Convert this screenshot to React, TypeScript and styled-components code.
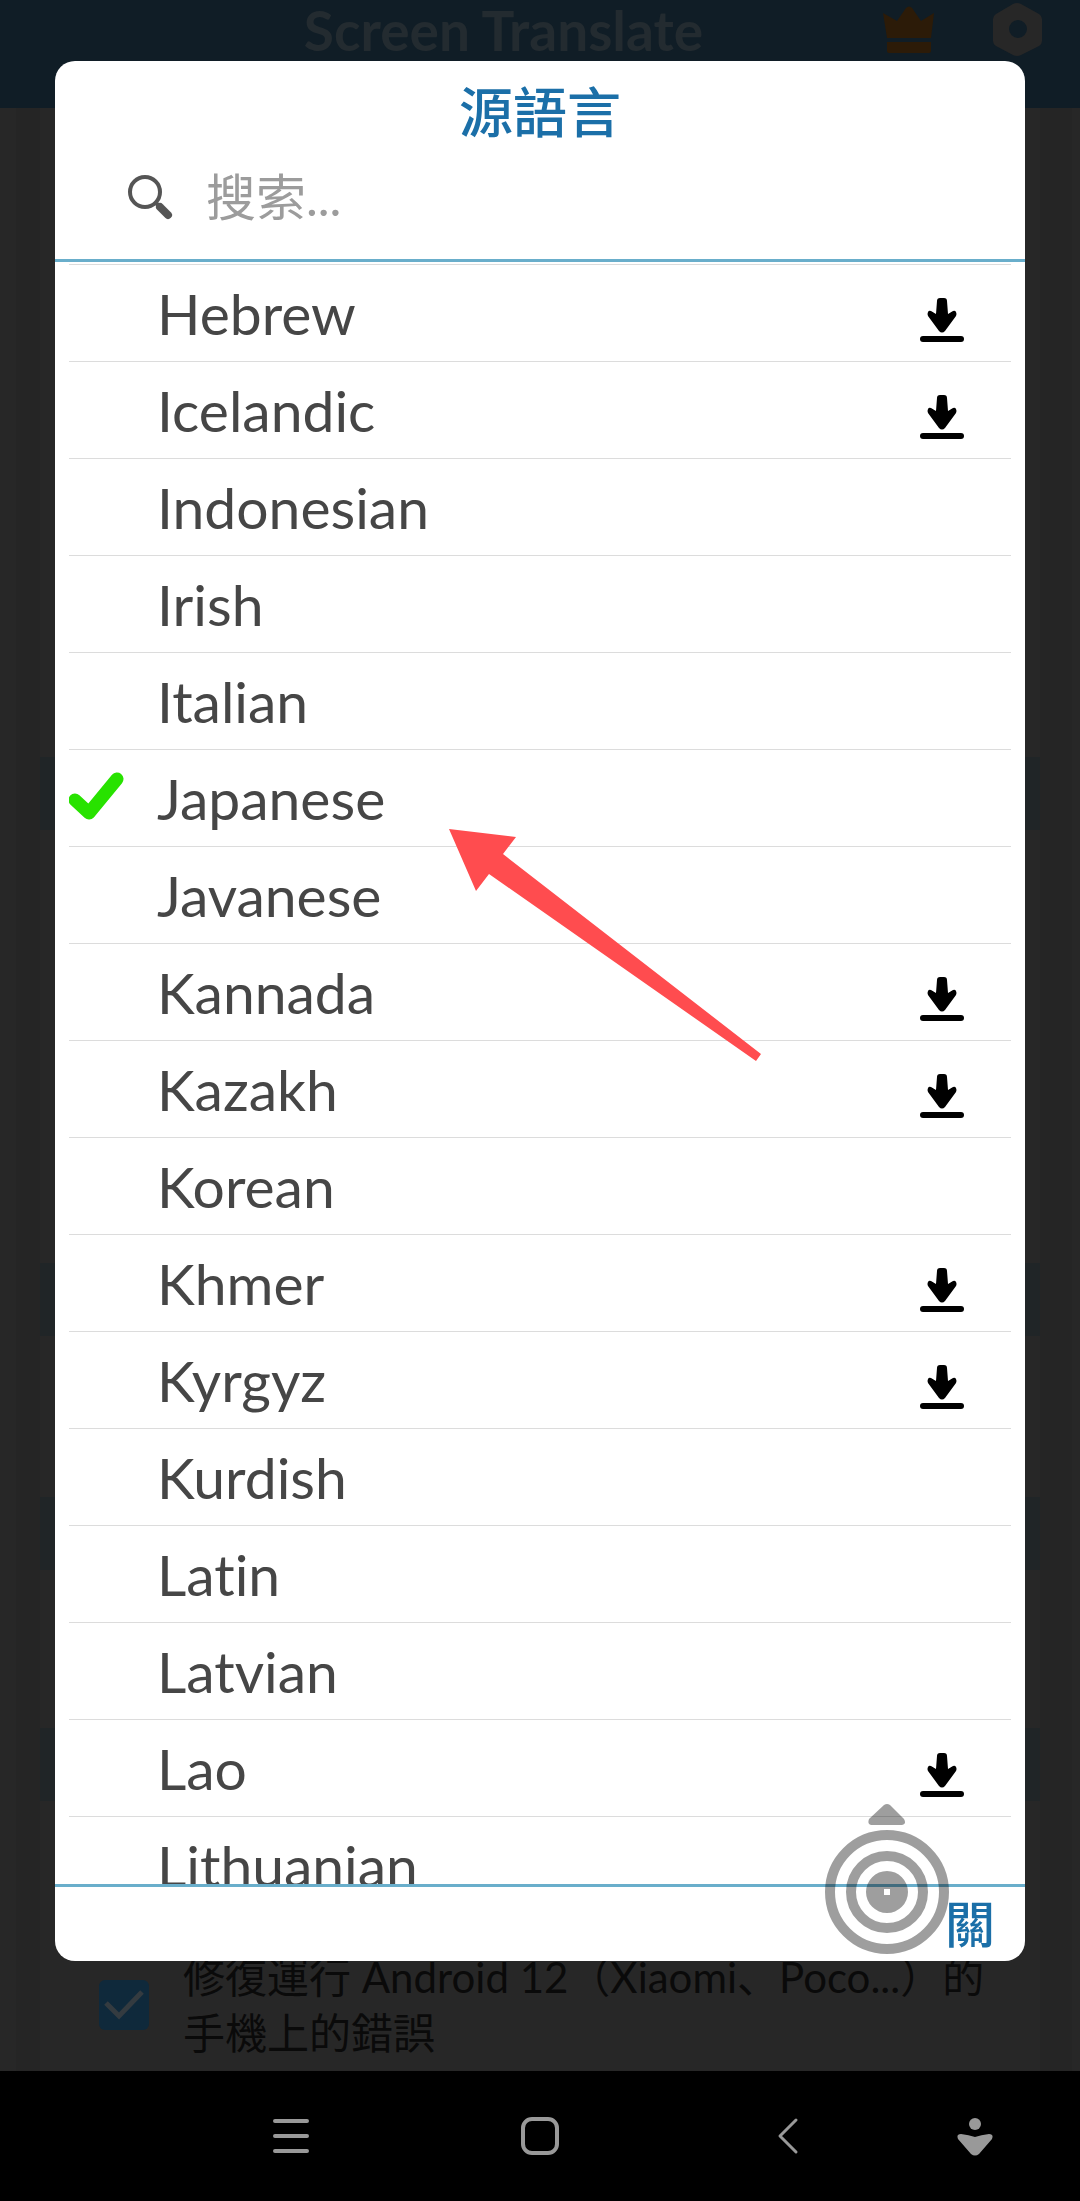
import React, { useState } from "react";
import styled, { createGlobalStyle } from "styled-components";

const latin = `Lato, "Noto Sans CJK TC", "Noto Sans", sans-serif`;
const latinSmall = `Lato, "Noto Sans CJK JP", "Noto Sans", sans-serif`;

const GlobalStyle = createGlobalStyle`
  *, *::before, *::after { box-sizing: border-box; }
  body { margin: 0; background: #000; font-family: ${latin}; font-variant-ligatures: none; }
  button, input { font: inherit; color: inherit; }
  button { margin: 0; padding: 0; border: 0; background: none; cursor: pointer; font-variant-ligatures: none; }
`;

const Screen = styled.div`
  display: flex;
  flex-direction: column;
  height: 100vh;
`;

const AppArea = styled.div`
  position: relative;
  flex: 1;
  min-height: 0;
  display: flex;
  flex-direction: column;
  overflow: hidden;
  background: #272727;
`;

const AppBar = styled.header`
  display: flex;
  align-items: flex-start;
  flex: none;
  height: 108px;
  padding: 0 37px 0 124px;
  background: #101d26;
`;

const AppTitle = styled.h1`
  flex: 1;
  margin: 0;
  color: #232b30;
  font-size: 55px;
  line-height: 60px;
  font-weight: 700;
  text-align: center;
`;

const AppActions = styled.div`
  display: flex;
  justify-content: flex-end;
  gap: 56px;
`;

const IconButton = styled.button`
  display: flex;
  width: 52px;
  height: 60px;
`;

const Settings = styled.main`
  flex: 1;
  min-height: 0;
  display: flex;
  flex-direction: column;
  margin: 0 8px 0 16px;
  padding: 0 32px 0 24px;
  background: #252525;
`;

const Section = styled.section<{ $height: number }>`
  flex: none;
  height: ${(p) => p.$height}px;
  background: #272727;
`;

const SectionBar = styled.div`
  height: 73px;
  background: #202527;
`;

const OptionSection = styled.section`
  flex: 1;
  display: flex;
  align-items: flex-end;
  padding: 0 32px 10px 59px;
  background: #272727;
`;

const Option = styled.label`
  display: flex;
  align-items: center;
  gap: 34px;
  color: #0a0a0a;
  font-family: ${latinSmall};
  font-size: 42px;
  line-height: 56px;
`;

const TickBox = styled.span`
  flex: none;
  display: grid;
  width: 50px;
  height: 50px;

  > * {
    grid-area: 1 / 1;
  }
`;

const Tick = styled.input`
  appearance: none;
  width: 50px;
  height: 50px;
  margin: 0;
  border-radius: 6px;
  background: #0f293b;
`;

const Dialog = styled.div`
  position: absolute;
  inset: 61px 55px 110px;
  display: flex;
  flex-direction: column;
  border-radius: 20px;
  background: #fff;
`;

const DialogHeader = styled.div`
  flex: none;
  display: flex;
  flex-direction: column;
  height: 201px;
  border-bottom: 3px solid #69aecb;
`;

const DialogTitle = styled.h2`
  margin: 0;
  padding-top: 20px;
  color: #1b6fa8;
  font-size: 54px;
  line-height: 64px;
  font-weight: 500;
  text-align: center;
`;

const SearchRow = styled.label`
  display: flex;
  align-items: center;
  gap: 32px;
  padding: 18px 72px 0 71px;
`;

const SearchInput = styled.input`
  flex: 1;
  min-width: 0;
  height: 68px;
  padding: 0;
  border: 0;
  outline: 0;
  background: none;
  color: #464646;
  font-size: 50px;

  &::placeholder {
    color: #9c9c9c;
    opacity: 1;
  }
`;

const LanguageList = styled.ul`
  flex: 1;
  min-height: 0;
  margin: 0;
  padding: 2px 14px 0;
  list-style: none;
  overflow-y: auto;
  scrollbar-width: none;
`;

const LanguageRow = styled.li`
  display: flex;
  align-items: center;
  height: 97px;
  padding-right: 46px;
  border-top: 1px solid #dcdcdc;
`;

const LanguageButton = styled.button`
  flex: 1;
  display: grid;
  grid-template-columns: 88px 1fr;
  align-items: center;
  height: 96px;
  color: #464646;
  font-size: 57px;
  line-height: 72px;
  text-align: left;
`;

const Mark = styled.span`
  display: flex;
`;

const DownloadButton = styled.button`
  display: flex;
  width: 46px;
  height: 58px;
`;

const DialogFooter = styled.div`
  flex: none;
  display: flex;
  justify-content: flex-end;
  height: 77px;
  padding-right: 30px;
  border-top: 3px solid #69aecb;
`;

const CloseButton = styled.button`
  color: #1b6fa8;
  font-size: 50px;
  line-height: 72px;
  font-weight: 500;
`;

const Pointer = styled.svg`
  position: absolute;
  left: 394px;
  top: 768px;
  pointer-events: none;
`;

const TouchBall = styled.svg`
  position: absolute;
  right: 75px;
  bottom: 6px;
  pointer-events: none;
`;

const NavBar = styled.nav`
  flex: none;
  display: grid;
  grid-template-columns: 166fr 249fr 249fr 249fr 124fr 43fr;
  height: 130px;
  background: #000;
`;

const NavButton = styled.button<{ $column: number }>`
  grid-column: ${(p) => p.$column};
  display: flex;
  align-items: center;
  justify-content: center;
`;

const LANGUAGES: { name: string; download?: boolean }[] = [
  { name: "Hebrew", download: true },
  { name: "Icelandic", download: true },
  { name: "Indonesian" },
  { name: "Irish" },
  { name: "Italian" },
  { name: "Japanese" },
  { name: "Javanese" },
  { name: "Kannada", download: true },
  { name: "Kazakh", download: true },
  { name: "Korean" },
  { name: "Khmer", download: true },
  { name: "Kyrgyz", download: true },
  { name: "Kurdish" },
  { name: "Latin" },
  { name: "Latvian" },
  { name: "Lao", download: true },
  { name: "Lithuanian" },
];

const CrownIcon = () => (
  <svg width="52" height="60" viewBox="0 0 52 60" fill="#2c1b08">
    <path d="M0 13l14 8 9-13q3-3 6 0l9 13 13-8-3 25H4z" />
    <path d="M4 42h44v9q0 2-2 2H6q-2 0-2-2z" />
  </svg>
);

const HexIcon = () => (
  <svg width="52" height="60" viewBox="0 0 52 60" fill="#272727">
    <path
      fillRule="evenodd"
      d="M22 4q4-2 8 0l18 10q3 2 3 5v22q0 3-3 5L30 55q-4 2-8 0L5 46q-3-2-3-5V19q0-3 3-5zM27 20a9 9 0 1 0 0 18a9 9 0 1 0 0-18z"
    />
  </svg>
);

const SearchIcon = () => (
  <svg width="48" height="48" viewBox="0 0 48 48" fill="none" stroke="#555" strokeLinecap="round">
    <circle cx="19" cy="19" r="15" strokeWidth="4" />
    <path d="M30 30l4 4" strokeWidth="4" />
    <path d="M34 34l8 8" strokeWidth="8" />
  </svg>
);

const CheckIcon = () => (
  <svg width="56" height="64" viewBox="0 -7 56 64" fill="none">
    <path d="M6 27l14 13L48 6" stroke="#28e200" strokeWidth="13" strokeLinecap="round" strokeLinejoin="round" />
  </svg>
);

const DownloadIcon = () => (
  <svg width="46" height="58" viewBox="0 0 46 58">
    <path d="M18 17q0-3 3-3h4q3 0 3 3l1 13 5-3q2-1 3 1t0 4L26 47q-3 3-6 0L9 32q-1-2 0-4t3-1l5 3z" />
    <rect x="1" y="52" width="44" height="6" rx="3" />
  </svg>
);

export default function App() {
  const [selected, setSelected] = useState("Japanese");
  return (
    <>
      <GlobalStyle />
      <Screen lang="zh-Hant">
        <AppArea>
          <AppBar>
            <AppTitle>Screen Translate</AppTitle>
            <AppActions>
              <IconButton aria-label="Premium">
                <CrownIcon />
              </IconButton>
              <IconButton aria-label="Settings">
                <HexIcon />
              </IconButton>
            </AppActions>
          </AppBar>
          <Settings>
            <Section $height={649} />
            <Section $height={506}>
              <SectionBar />
            </Section>
            <Section $height={234}>
              <SectionBar />
            </Section>
            <Section $height={231}>
              <SectionBar />
            </Section>
            <Section $height={73}>
              <SectionBar />
            </Section>
            <OptionSection>
              <Option lang="ja">
                <TickBox>
                  <Tick type="checkbox" defaultChecked />
                  <svg width="50" height="50" viewBox="0 0 50 50" fill="none" stroke="#343b40" strokeWidth="5">
                    <path d="M7 23l13 13L43 12" />
                  </svg>
                </TickBox>
                <span>修復運行 Android 12（Xiaomi、Poco...）的手機上的錯誤</span>
              </Option>
            </OptionSection>
          </Settings>

          <Dialog role="dialog" aria-labelledby="dialog-title">
            <DialogHeader>
              <DialogTitle id="dialog-title">源語言</DialogTitle>
              <SearchRow>
                <SearchIcon />
                <SearchInput type="text" aria-label="搜索" placeholder="搜索..." />
              </SearchRow>
            </DialogHeader>
            <LanguageList>
              {LANGUAGES.map(({ name, download }) => (
                <LanguageRow key={name}>
                  <LanguageButton aria-pressed={selected === name} onClick={() => setSelected(name)}>
                    <Mark>{selected === name && <CheckIcon />}</Mark>
                    {name}
                  </LanguageButton>
                  {download && (
                    <DownloadButton aria-label={`Download ${name}`}>
                      <DownloadIcon />
                    </DownloadButton>
                  )}
                </LanguageRow>
              ))}
            </LanguageList>
            <DialogFooter>
              <CloseButton>關</CloseButton>
            </DialogFooter>
            <Pointer width="314" height="234" viewBox="0 0 314 234" fill="#ff4c4f">
              <path d="M0 0L67 8 54 25 312 225 307 232 40 45 27 62z" />
            </Pointer>
            <TouchBall width="126" height="154" viewBox="0 0 126 154" fill="#000" fillOpacity="0.38">
              <path d="M60 4q3-2 6 0l14 14q3 5-2 6H47q-4-1-2-6z" />
              <g fill="none" stroke="#000" strokeOpacity="0.38">
                <circle cx="63" cy="91" r="57" strokeWidth="10" />
                <circle cx="63" cy="91" r="36" strokeWidth="10" />
              </g>
              <path fillRule="evenodd" d="M63 70a21 21 0 1 0 0 42a21 21 0 1 0 0-42zM60 88h6v6h-6z" />
            </TouchBall>
          </Dialog>
        </AppArea>

        <NavBar>
          <NavButton $column={2} aria-label="Menu">
            <svg width="40" height="40" viewBox="0 0 40 40" stroke="#999" strokeWidth="4" strokeLinecap="round">
              <path d="M4 5h32M4 20h32M4 35h32" />
            </svg>
          </NavButton>
          <NavButton $column={3} aria-label="Home">
            <svg width="40" height="40" viewBox="0 0 40 40" fill="none" stroke="#999" strokeWidth="4">
              <rect x="3" y="3" width="34" height="34" rx="9" />
            </svg>
          </NavButton>
          <NavButton $column={4} aria-label="Back">
            <svg width="40" height="40" viewBox="0 0 40 40" fill="none" stroke="#999" strokeWidth="3" strokeLinecap="round" strokeLinejoin="round">
              <path d="M27 4L11 20l16 16" />
            </svg>
          </NavButton>
          <NavButton $column={5} aria-label="Accessibility">
            <svg width="40" height="40" viewBox="0 0 40 40" fill="#999">
              <circle cx="20" cy="8" r="6" />
              <path d="M6 18q8 1 14 3 6-2 14-3 5 0 3 5L24 38q-4 3-8 0L3 23q-2-5 3-5z" />
            </svg>
          </NavButton>
        </NavBar>
      </Screen>
    </>
  );
}
